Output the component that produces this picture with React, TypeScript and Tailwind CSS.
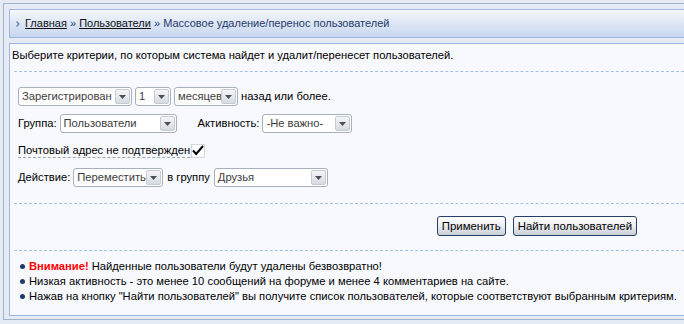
import React from "react";

function Arrow() {
  return (
    <svg width="7" height="4" viewBox="0 0 7 4">
      <path d="M0 0h7L3.5 4z" fill="#4b4f57" />
    </svg>
  );
}

function Select({ className, value }: { className: string; value: string }) {
  return (
    <div
      className={`flex h-[19px] items-stretch rounded-[3px] border border-[#a7b0bd] bg-white p-[1px] ${className}`}
    >
      <span className="flex-1 overflow-hidden whitespace-nowrap pl-[2px] leading-[15px] text-[#3c3c3c]">{value}</span>
      <span className="flex w-[15px] items-center justify-center rounded-[2px] border border-[#c5cbd3] bg-gradient-to-b from-[#f4f5f7] to-[#d6dbe2]">
        <Arrow />
      </span>
    </div>
  );
}

function Dashed() {
  return <div className="ml-[2px] border-t border-dashed border-[#a9c0e6]" />;
}

function Button({ children }: { children: React.ReactNode }) {
  return (
    <button className="h-[20px] rounded-[3px] border border-[#263f66] bg-gradient-to-b from-[#ffffff] via-[#eceef1] to-[#c9ced6] px-[4px] text-[11.4px] leading-[16px] text-black">
      {children}
    </button>
  );
}

export default function App() {
  return (
    <div className="h-[324px] w-[684px] overflow-hidden bg-[#e4ebf5] pt-[3px] pl-[3px] font-['Liberation_Sans',Arial,sans-serif] text-[11.2px] text-black">
      <div className="border-t border-b border-l border-[#a2b2c8] pt-[5px] pb-[3px] pl-[5px]">
        {/* хлебные крошки */}
        <div className="flex h-[29px] items-center border-t border-b border-l border-[#9fb6df] bg-gradient-to-b from-[#f5f7fc] to-[#c7d6ef] pl-[6px]">
          <svg width="4" height="6" viewBox="0 0 4 6" className="mr-[5px]">
            <path d="M0.5 0.5L3 3L0.5 5.5" fill="none" stroke="#5a7cb5" strokeWidth="1.2" />
          </svg>
          <span className="text-[11px] text-[#1f3a6b]">
            <a className="text-[#111] underline">Главная</a> »{" "}
            <a className="text-[#111] underline">Пользователи</a> » Массовое удаление/перенос пользователей
          </span>
        </div>

        {/* основной блок */}
        <div className="mt-[5px] h-[273px] border-t border-b border-l border-[#9fb6df] bg-[#f7f9fe] pl-[2px]">
          <div className="pt-[2px] leading-[18px]">
            Выберите критерии, по которым система найдет и удалит/перенесет пользователей.
          </div>
          <div className="mt-[7px]">
            <Dashed />
          </div>

          <div className="flex flex-col gap-[8px] pt-[15px] pl-[6px]">
            <div className="flex items-center gap-[3px]">
              <Select className="w-[114px]" value="Зарегистрирован" />
              <Select className="w-[36px]" value="1" />
              <Select className="w-[64px]" value="месяцев" />
              <span>назад или более.</span>
            </div>
            <div className="flex items-center">
              <span className="mr-[3px]">Группа:</span>
              <Select className="w-[117px]" value="Пользователи" />
              <span className="ml-[21px] mr-[3px]">Активность:</span>
              <Select className="w-[90px]" value="-Не важно-" />
            </div>
            <div className="flex h-[19px] items-center">
              <span className="border-b border-dashed border-[#9aa6b8] leading-[13px]">Почтовый адрес не подтвержден</span>
              <span className="ml-[1px] flex h-[14px] w-[14px] items-center justify-center border border-[#d3d8df] bg-white">
                <svg width="12" height="11" viewBox="0 0 12 11">
                  <path d="M1 5.5L4.2 9L11 1" fill="none" stroke="#000" strokeWidth="2" />
                </svg>
              </span>
            </div>
            <div className="flex items-center">
              <span className="mr-[3px]">Действие:</span>
              <Select className="w-[90px]" value="Переместить" />
              <span className="mx-[4px]">в группу</span>
              <Select className="w-[114px]" value="Друзья" />
            </div>
          </div>

          <div className="mt-[16px]">
            <Dashed />
          </div>

          <div className="flex justify-end gap-[7px] pt-[12px] pr-[47px]">
            <Button>Применить</Button>
            <Button>Найти пользователей</Button>
          </div>

          <div className="mt-[14px]">
            <Dashed />
          </div>

          <ul className="pt-[8px] pl-[8px] leading-[15px]">
            {[
              <>
                <b className="text-[#ff0000]">Внимание!</b> Найденные пользователи будут удалены безвозвратно!
              </>,
              <>Низкая активность - это менее 10 сообщений на форуме и менее 4 комментариев на сайте.</>,
              <>Нажав на кнопку "Найти пользователей" вы получите список пользователей, которые соответствуют выбранным критериям.</>,
            ].map((t, i) => (
              <li key={i} className="flex items-center">
                <span className="mr-[4px] h-[5px] w-[5px] shrink-0 rounded-full bg-[#1e3a68]" />
                <span>{t}</span>
              </li>
            ))}
          </ul>
        </div>
      </div>
    </div>
  );
}
